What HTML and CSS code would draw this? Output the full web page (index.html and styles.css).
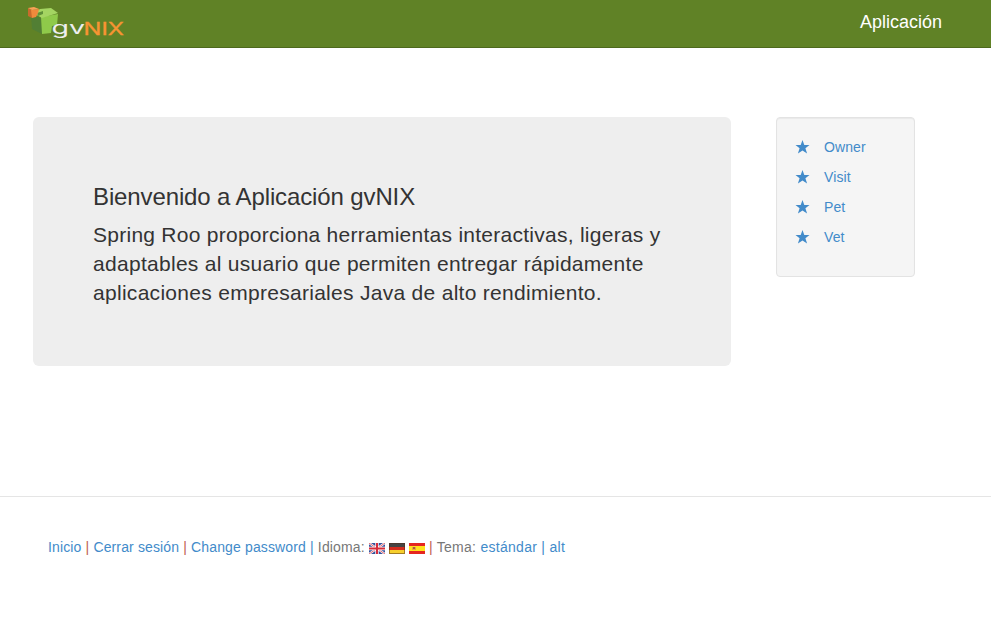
FILE: index.html
```
<!DOCTYPE html>
<html lang="es">
<head>
<meta charset="utf-8">
<title>Aplicación gvNIX</title>
<link rel="stylesheet" href="styles.css">
</head>
<body>
<header class="navbar">
  <a class="brand" href="#">
    <svg class="logo" width="100" height="36" viewBox="26 4 100 36">
      <polygon fill="#527f34" points="31,15 42,18 42,34 32,29"/>
      <polygon fill="#8fca4a" points="41,17 58,14 57,25 52,26 51,33 42,34"/>
      <polygon fill="#a4d562" points="33,13 40,9 51,8 58,13 42,18"/>
      <polygon fill="#5f9138" points="37,13 43,11 43,14 38,16"/>
      <polygon fill="#c86b2c" points="28,8 32,10 32,18 28,16"/>
      <polygon fill="#f08a3c" points="31,10 39,9 38,13 36,17 32,18"/>
      <polygon fill="#f9a257" points="28,8 34,7 39,9 32,10"/>
      <text class="logo-gv" x="51.5" y="34" textLength="33.5" lengthAdjust="spacingAndGlyphs">gv</text>
      <text class="logo-nix" x="83.5" y="34.5" textLength="40.5" lengthAdjust="spacingAndGlyphs">NIX</text>
    </svg>
  </a>
  <a class="app-name" href="#">Aplicación</a>
</header>
<main class="content">
  <section class="jumbotron">
    <h3>Bienvenido a Aplicación gvNIX</h3>
    <p>Spring Roo proporciona herramientas interactivas, ligeras y adaptables al usuario que permiten entregar rápidamente aplicaciones empresariales Java de alto rendimiento.</p>
  </section>
  <nav class="sidebar">
    <a href="#"><svg class="star" viewBox="0 0 14 14"><path d="M7 0l1.8 5H14L9.9 8.3 11.6 13.6 7 10.4 2.4 13.6 4.1 8.3 0 5h5.2z"/></svg>Owner</a>
    <a href="#"><svg class="star" viewBox="0 0 14 14"><path d="M7 0l1.8 5H14L9.9 8.3 11.6 13.6 7 10.4 2.4 13.6 4.1 8.3 0 5h5.2z"/></svg>Visit</a>
    <a href="#"><svg class="star" viewBox="0 0 14 14"><path d="M7 0l1.8 5H14L9.9 8.3 11.6 13.6 7 10.4 2.4 13.6 4.1 8.3 0 5h5.2z"/></svg>Pet</a>
    <a href="#"><svg class="star" viewBox="0 0 14 14"><path d="M7 0l1.8 5H14L9.9 8.3 11.6 13.6 7 10.4 2.4 13.6 4.1 8.3 0 5h5.2z"/></svg>Vet</a>
  </nav>
</main>
<footer class="footer">
  <a href="#">Inicio</a> <span class="sep">|</span> <a href="#">Cerrar sesión</a> <span class="sep">|</span> <a href="#">Change password</a> <span class="bar">|</span> Idioma:
  <svg class="flag" viewBox="0 0 16 11"><rect width="16" height="11" fill="#36529c"/><path d="M0 0l16 11M16 0L0 11" stroke="#fff" stroke-width="2.2"/><path d="M0 0l16 11M16 0L0 11" stroke="#dc5560" stroke-width=".9"/><path d="M8 0v11M0 5.5h16" stroke="#fff" stroke-width="3.4"/><path d="M8 0v11M0 5.5h16" stroke="#d52b3b" stroke-width="2"/></svg>
  <svg class="flag" viewBox="0 0 16 11"><rect width="16" height="4" fill="#444"/><rect y="4" width="16" height="3" fill="#d32c1e"/><rect y="7" width="16" height="4" fill="#f6cf2d"/><rect x=".5" y=".5" width="15" height="10" fill="none" stroke="#502c18" stroke-opacity=".5"/></svg>
  <svg class="flag" viewBox="0 0 16 11"><rect width="16" height="11" fill="#e52620"/><rect y="3" width="16" height="5" fill="#ffe21d"/><path d="M3 4h4v3H3z" fill="#e9a83a"/><path d="M4 4h2v2H4z" fill="#a95b45"/></svg>
  <span class="tail"><span class="sep">|</span> Tema: <a href="#">estándar</a> <span class="bar">|</span> <a href="#">alt</a></span>
</footer>
</body>
</html>
```
FILE: styles.css
```
* { box-sizing: border-box; }
body {
  margin: 0;
  font: 14px/20px "Liberation Sans", Arial, sans-serif;
  color: #333;
  background: #fff;
}
a { color: #428bca; text-decoration: none; }
.navbar {
  display: flex;
  justify-content: space-between;
  height: 48px;
  padding: 0 49px 0 26px;
  background: #608226;
  border-bottom: 1px solid #4d691d;
}
.brand { padding-top: 4px; }
.logo { display: block; }
.logo-gv, .logo-nix { font: 400 17px Inter, sans-serif; }
.logo-gv { fill: #eee; }
.logo-nix { fill: #f79433; stroke: #f79433; stroke-width: .3; }
.app-name { color: #fff; font-size: 18px; line-height: 20px; padding-top: 12px; }
.content {
  display: flex;
  align-items: flex-start;
  gap: 45px;
  height: 448px;
  padding: 69px 0 0 33px;
}
.jumbotron {
  width: 698px;
  height: 249px;
  padding: 60px;
  border-radius: 6px;
  background: #eee;
}
.jumbotron h3 {
  margin: 7px 0 10px;
  font-size: 24px;
  line-height: 26px;
  font-weight: 400;
  letter-spacing: -.12px;
}
.jumbotron p { margin: 0; font-size: 21px; line-height: 29px; letter-spacing: .29px; }
.jumbotron p::first-line { letter-spacing: .26px; }
.sidebar {
  width: 139px;
  height: 160px;
  padding: 14px 18px;
  border: 1px solid #e3e3e3;
  border-radius: 4px;
  background: #f5f5f5;
  box-shadow: inset 0 1px 1px rgba(0, 0, 0, .05);
}
.sidebar a { display: flex; align-items: center; gap: 14px; height: 30px; letter-spacing: .1px; }
.star { width: 15px; height: 14px; fill: #428bca; }
.footer {
  height: 143px;
  padding: 40px 48px;
  border-top: 1px solid #e5e5e5;
  color: #777;
  white-space: nowrap;
  letter-spacing: .14px;
}
.tail { letter-spacing: .28px; }
.sep { color: #c0604f; }
.bar { color: #428bca; }
.flag { width: 16px; height: 11px; vertical-align: -2px; }
```
